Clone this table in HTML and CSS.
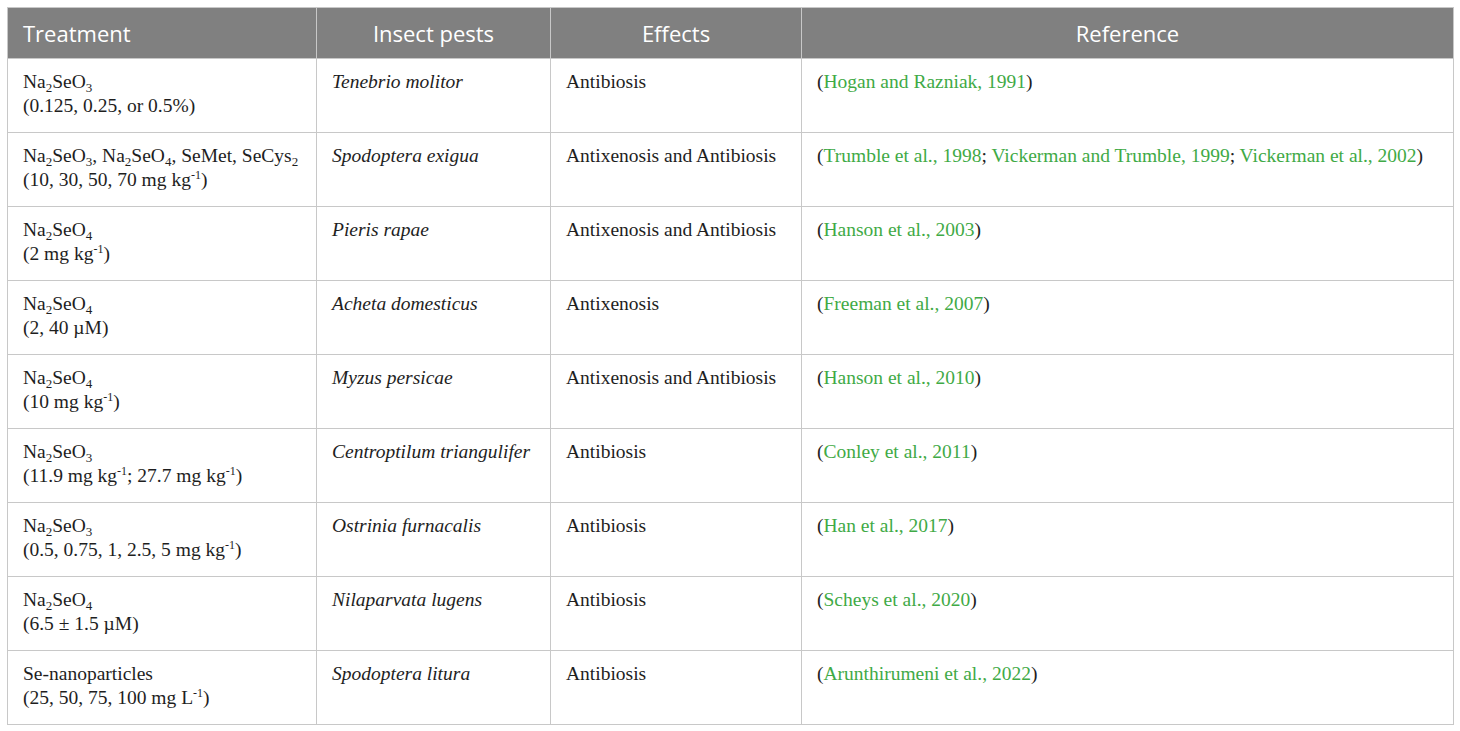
FILE: index.html
```html
<!DOCTYPE html>
<html>
<head>
<meta charset="utf-8">
<link rel="stylesheet" href="styles.css">
</head>
<body>
<table class="tbl">
  <colgroup>
    <col class="c1"><col class="c2"><col class="c3"><col class="c4">
  </colgroup>
  <thead>
    <tr>
      <th class="left">Treatment</th>
      <th>Insect pests</th>
      <th>Effects</th>
      <th>Reference</th>
    </tr>
  </thead>
  <tbody>
    <tr>
      <td>Na<sub>2</sub>SeO<sub>3</sub><br>(0.125, 0.25, or 0.5%)</td>
      <td><i>Tenebrio molitor</i></td>
      <td>Antibiosis</td>
      <td>(<a>Hogan and Razniak, 1991</a>)</td>
    </tr>
    <tr>
      <td>Na<sub>2</sub>SeO<sub>3</sub>, Na<sub>2</sub>SeO<sub>4</sub>, SeMet, SeCys<sub>2</sub><br>(10, 30, 50, 70 mg kg<sup>-1</sup>)</td>
      <td><i>Spodoptera exigua</i></td>
      <td>Antixenosis and Antibiosis</td>
      <td>(<a>Trumble et al., 1998</a>; <a>Vickerman and Trumble, 1999</a>; <a>Vickerman et al., 2002</a>)</td>
    </tr>
    <tr>
      <td>Na<sub>2</sub>SeO<sub>4</sub><br>(2 mg kg<sup>-1</sup>)</td>
      <td><i>Pieris rapae</i></td>
      <td>Antixenosis and Antibiosis</td>
      <td>(<a>Hanson et al., 2003</a>)</td>
    </tr>
    <tr>
      <td>Na<sub>2</sub>SeO<sub>4</sub><br>(2, 40 µM)</td>
      <td><i>Acheta domesticus</i></td>
      <td>Antixenosis</td>
      <td>(<a>Freeman et al., 2007</a>)</td>
    </tr>
    <tr>
      <td>Na<sub>2</sub>SeO<sub>4</sub><br>(10 mg kg<sup>-1</sup>)</td>
      <td><i>Myzus persicae</i></td>
      <td>Antixenosis and Antibiosis</td>
      <td>(<a>Hanson et al., 2010</a>)</td>
    </tr>
    <tr>
      <td>Na<sub>2</sub>SeO<sub>3</sub><br>(11.9 mg kg<sup>-1</sup>; 27.7 mg kg<sup>-1</sup>)</td>
      <td><i>Centroptilum triangulifer</i></td>
      <td>Antibiosis</td>
      <td>(<a>Conley et al., 2011</a>)</td>
    </tr>
    <tr>
      <td>Na<sub>2</sub>SeO<sub>3</sub><br>(0.5, 0.75, 1, 2.5, 5 mg kg<sup>-1</sup>)</td>
      <td><i>Ostrinia furnacalis</i></td>
      <td>Antibiosis</td>
      <td>(<a>Han et al., 2017</a>)</td>
    </tr>
    <tr>
      <td>Na<sub>2</sub>SeO<sub>4</sub><br>(6.5 ± 1.5 µM)</td>
      <td><i>Nilaparvata lugens</i></td>
      <td>Antibiosis</td>
      <td>(<a>Scheys et al., 2020</a>)</td>
    </tr>
    <tr>
      <td>Se-nanoparticles<br>(25, 50, 75, 100 mg L<sup>-1</sup>)</td>
      <td><i>Spodoptera litura</i></td>
      <td>Antibiosis</td>
      <td>(<a>Arunthirumeni et al., 2022</a>)</td>
    </tr>
  </tbody>
</table>
</body>
</html>
```

FILE: styles.css
```css
html, body {
  margin: 0;
  padding: 0;
  background: #ffffff;
}
body {
  padding: 7px 0 0 7px;
}
.tbl {
  border-collapse: collapse;
  table-layout: fixed;
  width: 1446px;
}
.c1 { width: 309px; }
.c2 { width: 234px; }
.c3 { width: 251px; }
.c4 { width: 652px; }
.tbl th {
  background: #808080;
  color: #ffffff;
  font-family: "Open Sans", "Noto Sans", sans-serif;
  font-weight: 400;
  font-size: 22px;
  height: 51px;
  padding: 0 15px;
  box-sizing: border-box;
  text-align: center;
  border: 1px solid #c8c8c8;
  vertical-align: middle;
}
.tbl th.left {
  text-align: left;
}
.tbl td {
  font-family: "Liberation Serif", "Times New Roman", serif;
  font-size: 19.5px;
  line-height: 24px;
  color: #1e1e1e;
  height: 74px;
  box-sizing: border-box;
  padding: 11px 15px 0;
  vertical-align: top;
  border: 1px solid #c8c8c8;
}
.tbl td a {
  color: #3faa46;
}
.tbl sub {
  font-size: 13px;
  line-height: 0;
  vertical-align: -4px;
}
.tbl sup {
  font-size: 12px;
  line-height: 0;
  vertical-align: 7px;
}
```
